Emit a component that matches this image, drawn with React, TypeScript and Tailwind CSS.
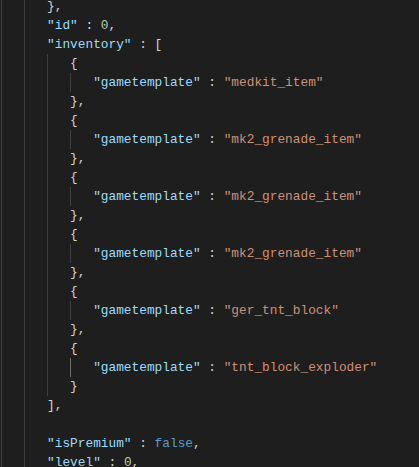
import React from "react";

type Tok = { t: string; c: string };
const P = "text-[#d4d4d4]";
const K = "text-[#9cdcfe]";
const S = "text-[#ce9178]";
const N = "text-[#b5cea8]";
const B = "text-[#569cd6]";

type Line = { guides: number; active?: number; toks: Tok[] };

const gt = (v: string, active = false): Line => ({
  guides: 4,
  active: active ? 3 : undefined,
  toks: [
    { t: '"gametemplate"', c: K },
    { t: " : ", c: P },
    { t: `"${v}"`, c: S },
  ],
});

const items = ["medkit_item", "mk2_grenade_item", "mk2_grenade_item", "mk2_grenade_item", "ger_tnt_block", "tnt_block_exploder"];

const lines: Line[] = [
  { guides: 2, toks: [{ t: "},", c: P }] },
  { guides: 2, toks: [{ t: '"id"', c: K }, { t: " : ", c: P }, { t: "0", c: N }, { t: ",", c: P }] },
  { guides: 2, toks: [{ t: '"inventory"', c: K }, { t: " : [", c: P }] },
];
items.forEach((it, i) => {
  const last = i === items.length - 1;
  lines.push({ guides: 3, toks: [{ t: "{", c: P }] });
  lines.push(gt(it, last));
  lines.push({ guides: 3, toks: [{ t: last ? "}" : "},", c: P }] });
});
lines.push({ guides: 2, toks: [{ t: "],", c: P }] });
lines.push({ guides: 2, toks: [] });
lines.push({ guides: 2, toks: [{ t: '"isPremium"', c: K }, { t: " : ", c: P }, { t: "false", c: B }, { t: ",", c: P }] });
lines.push({ guides: 2, toks: [{ t: '"level"', c: K }, { t: " : ", c: P }, { t: "0", c: N }, { t: ",", c: P }] });

export default function App() {
  return (
    <div className="w-[419px] h-[467px] bg-[#1e1e1e] overflow-hidden">
      <div
        className="flex flex-col -mt-[3px] pl-[1px] text-[12.8px] whitespace-pre"
        style={{ fontFamily: '"Liberation Mono", "DejaVu Sans Mono", monospace' }}
      >
        {lines.map((ln, i) => (
          <div key={i} className="flex h-[19px] items-center">
            {Array.from({ length: ln.guides }).map((_, g) => (
              <span
                key={g}
                className={
                  "w-[3ch] h-full shrink-0 border-l " +
                  (ln.active === g ? "border-[#707070]" : "border-[#404040]")
                }
              />
            ))}
            {ln.toks.map((tk, j) => (
              <span key={j} className={tk.c}>
                {tk.t}
              </span>
            ))}
          </div>
        ))}
      </div>
    </div>
  );
}
